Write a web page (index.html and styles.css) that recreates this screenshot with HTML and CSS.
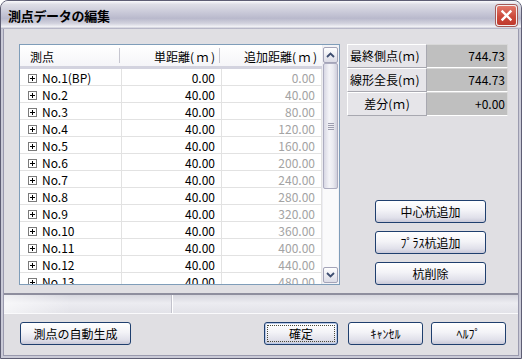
FILE: index.html
```html
<!DOCTYPE html>
<html lang="ja">
<head>
    <meta charset="UTF-8">
    <title>測点データの編集</title>
    <link rel="stylesheet" href="styles.css">
</head>
<body>

    <div class="window">
        <div class="titlebar">
            <span class="title">測点データの編集</span>
            <span class="close-btn">
                <svg width="13" height="13" viewBox="0 0 13 13"><path d="M2.5 2.5 L10.5 10.5 M10.5 2.5 L2.5 10.5" stroke="#fff" stroke-width="2.4" stroke-linecap="square"/></svg>
            </span>
        </div>

        <div class="client">
            <div class="main">
                <div class="grid">
                    <div class="grid-table">
                        <div class="grid-head">
                            <div class="hcell h-name">測点</div>
                            <div class="hcell h-dist">単距離(&#8201;ｍ&#8201;)</div>
                            <div class="hcell h-total">追加距離(&#8201;ｍ&#8201;)</div>
                        </div>
                        <div class="grid-body" id="gridBody">
                            <!-- rows are inserted by the script below -->
                        </div>
                    </div>
                    <div class="scrollbar">
                        <div class="sb-btn sb-up">
                            <svg width="9" height="6" viewBox="0 0 9 6"><path d="M1 5 L4.5 1.5 L8 5" fill="none" stroke="#3d4d70" stroke-width="1.8"/></svg>
                        </div>
                        <div class="sb-thumb"><span class="grip"></span></div>
                        <div class="sb-track"></div>
                        <div class="sb-btn sb-down">
                            <svg width="9" height="6" viewBox="0 0 9 6"><path d="M1 1 L4.5 4.5 L8 1" fill="none" stroke="#3d4d70" stroke-width="1.8"/></svg>
                        </div>
                    </div>
                </div>

                <div class="side">
                    <div class="info">
                        <div class="info-label">最終側点(&#8202;ｍ&#8202;)</div>
                        <div class="info-value">744.73</div>
                        <div class="info-label">線形全長(&#8202;ｍ&#8202;)</div>
                        <div class="info-value">744.73</div>
                        <div class="info-label center">差分(&#8202;ｍ&#8202;)</div>
                        <div class="info-value">+0.00</div>
                    </div>
                    <div class="side-buttons">
                        <button class="btn btn-side">中心杭追加</button>
                        <button class="btn btn-side">ﾌﾟﾗｽ杭追加</button>
                        <button class="btn btn-side">杭削除</button>
                    </div>
                </div>
            </div>

            <div class="statusbar">
                <div class="status-cell first"></div>
                <div class="status-cell"></div>
            </div>

            <div class="footer">
                <button class="btn btn-auto">測点の自動生成</button>
                <div class="footer-right">
                    <button class="btn btn-ok">確定</button>
                    <button class="btn btn-cancel">ｷｬﾝｾﾙ</button>
                    <button class="btn btn-help">ﾍﾙﾌﾟ</button>
                </div>
            </div>
        </div>
    </div>

    <script>
        // station rows: first is BP, then 40m intervals
        const rows = [];
        for (let i = 1; i <= 13; i++) {
            rows.push({
                name: i === 1 ? 'No.1(BP)' : 'No.' + i,
                dist: i === 1 ? '0.00' : '40.00',
                total: ((i - 1) * 40).toFixed(2)
            });
        }

        const body = document.getElementById('gridBody');
        rows.forEach(r => {
            const row = document.createElement('div');
            row.className = 'grid-row';
            row.innerHTML = `
                <div class="cell c-name">
                    <svg class="plus" width="9" height="9" viewBox="0 0 9 9"><rect x="0.5" y="0.5" width="8" height="8" fill="#fff" stroke="#7a7a7a"/><path d="M2 4.5 H7 M4.5 2 V7" stroke="#000" stroke-width="1"/></svg>
                    <span>${r.name}</span>
                </div>
                <div class="cell c-dist">${r.dist}</div>
                <div class="cell c-total">${r.total}</div>
            `;
            body.appendChild(row);
        });
    </script>

</body>
</html>
```

FILE: styles.css
```css
body {
    margin: 0;
    background: #ffffff;
    font-family: "Noto Sans CJK JP", sans-serif;
    font-size: 12px;
    color: #000;
}
.window {
    width: 522px;
    height: 359px;
    box-sizing: border-box;
    border: 1px solid #5e5e74;
    border-radius: 8px 8px 0 0;
    background: #cacad7;
    display: flex;
    flex-direction: column;
    overflow: hidden;
}
.titlebar {
    height: 28px;
    flex: none;
    display: flex;
    align-items: center;
    justify-content: space-between;
    padding: 0 4px 0 7px;
    background: linear-gradient(to bottom, #fbfbfd 0%, #dedee6 12%, #c6c6d6 45%, #b9b9cc 62%, #d2d2de 80%, #f2f2f6 92%, #a6a6ba 100%);
}
.title {
    font-weight: bold;
    font-size: 13px;
    letter-spacing: -0.3px;
}
.close-btn {
    width: 19px;
    height: 19px;
    margin-top: 1px;
    border: 1px solid #f4f0f0;
    border-radius: 3px;
    background: linear-gradient(to bottom, #e27a6c, #cc4a3c 55%, #c0392d);
    box-shadow: 0 0 0 1px #a35a58;
    display: flex;
    align-items: center;
    justify-content: center;
}
.client {
    flex: 1;
    margin: 0 2px 2px;
    border: 1px solid #9a9aae;
    border-top: none;
    background: #e0dfe3;
    display: flex;
    flex-direction: column;
}
.main {
    display: flex;
    gap: 7px;
    padding: 15px 0 0 15px;
    height: 241px;
}
.grid {
    width: 321px;
    height: 241px;
    box-sizing: border-box;
    border: 1px solid #7f9db9;
    background: #ffffff;
    display: flex;
}
.grid-table {
    width: 302px;
    display: flex;
    flex-direction: column;
    overflow: hidden;
}
.grid-head {
    display: flex;
    height: 21px;
    flex: none;
    border-bottom: 3px solid #d3d3df;
    background: linear-gradient(to bottom, #ffffff, #f5f5f8);
}
.hcell {
    box-sizing: border-box;
    line-height: 23px;
    white-space: nowrap;
}
.h-name, .h-dist {
    width: 100px;
    background: linear-gradient(#c6c6d0, #c6c6d0) no-repeat right center / 1px 15px;
}
.h-name {
    padding-left: 10px;
}
.h-dist {
    text-align: right;
    padding-right: 5px;
}
.h-total {
    width: 102px;
    text-align: right;
    padding-right: 5px;
}
.grid-body {
    flex: 1;
    overflow: hidden;
}
.grid-row {
    display: flex;
    height: 17px;
    box-sizing: border-box;
    border-bottom: 1px solid #e2e2e2;
}
.cell {
    box-sizing: border-box;
    line-height: 18px;
    border-right: 1px solid #e2e2e2;
    white-space: nowrap;
}
.c-name {
    width: 102px;
    display: flex;
    align-items: center;
    gap: 5px;
    padding: 2px 0 0 8px;
    line-height: 14px;
}
.c-dist {
    width: 100px;
    text-align: right;
    padding-right: 6px;
}
.c-total {
    width: 100px;
    text-align: right;
    padding-right: 6px;
    color: #a3a3a3;
}
.scrollbar {
    width: 17px;
    display: flex;
    flex-direction: column;
    padding: 2px 1px 1px 0;
    box-sizing: border-box;
    background: #f3f3f6;
    border-left: 1px solid #ededf2;
}
.sb-btn {
    height: 16px;
    flex: none;
    box-sizing: border-box;
    border: 1px solid #a4a4b8;
    border-radius: 2px;
    background: linear-gradient(to bottom, #ffffff, #dcdce6);
    display: flex;
    align-items: center;
    justify-content: center;
}
.sb-thumb {
    height: 126px;
    flex: none;
    box-sizing: border-box;
    border: 1px solid #acacc0;
    border-radius: 2px;
    background: linear-gradient(to right, #d8d8e4, #f4f4f8 40%, #eaeaf0 70%, #cfcfdc);
    display: flex;
    align-items: center;
    justify-content: center;
}
.grip {
    width: 6px;
    height: 7px;
    background: repeating-linear-gradient(to bottom, #9c9cae 0 1px, transparent 1px 2px);
}
.sb-track {
    flex: 1;
    background: #fafafb;
}
.side {
    width: 161px;
    display: flex;
    flex-direction: column;
    justify-content: space-between;
}
.info {
    display: grid;
    grid-template-columns: 80px 81px;
    grid-auto-rows: 24px;
}
.info-label {
    box-sizing: border-box;
    padding-left: 2px;
    line-height: 22px;
    background: #e6e5e9;
    border: 1px solid #ffffff;
    border-right-color: #a8a8b0;
    border-bottom-color: #a8a8b0;
    white-space: nowrap;
    overflow: hidden;
}
.info-label.center {
    text-align: center;
    padding-left: 0;
}
.info-value {
    box-sizing: border-box;
    line-height: 22px;
    text-align: right;
    padding-right: 2px;
    background: #bfbfbf;
    border: 1px solid #d8d8d8;
    border-left: none;
    border-bottom-color: #ffffff;
}
.side-buttons {
    display: flex;
    flex-direction: column;
    gap: 8px;
    padding-left: 28px;
}
.btn {
    height: 23px;
    box-sizing: border-box;
    padding: 0;
    border: 1px solid #1f3f6e;
    border-radius: 3px;
    background: linear-gradient(to bottom, #ffffff 0%, #f3f3f7 45%, #e0e0ea 80%, #c9c9d8 100%);
    font-family: "Noto Sans CJK JP", sans-serif;
    font-size: 12px;
    color: #000;
    line-height: 20px;
}
.btn-side {
    width: 111px;
}
.statusbar {
    height: 21px;
    margin-top: 8px;
    box-sizing: border-box;
    display: flex;
    border-top: 2px solid #8e8e9e;
    border-bottom: 1px solid #fafafc;
    background: linear-gradient(to bottom, #d6d6de, #ececf1 45%, #e2e2e8);
}
.status-cell.first {
    width: 167px;
    border-right: 1px solid #c2c2cc;
    box-shadow: 1px 0 0 #ffffff;
    background: linear-gradient(to right, rgba(255,255,255,0.6), rgba(255,255,255,0) 40%);
}
.footer {
    flex: 1;
    display: flex;
    align-items: flex-start;
    justify-content: space-between;
    padding: 8px 12px 0 16px;
}
.btn-auto {
    width: 111px;
}
.footer-right {
    display: flex;
    gap: 10px;
}
.btn-ok {
    width: 74px;
    outline: 1px dotted #4a4a3a;
    outline-offset: -4px;
    box-shadow: inset 0 0 0 1px #b8c8e6;
}
.btn-cancel {
    width: 75px;
}
.btn-help {
    width: 75px;
    margin-left: -2px;
}
```
